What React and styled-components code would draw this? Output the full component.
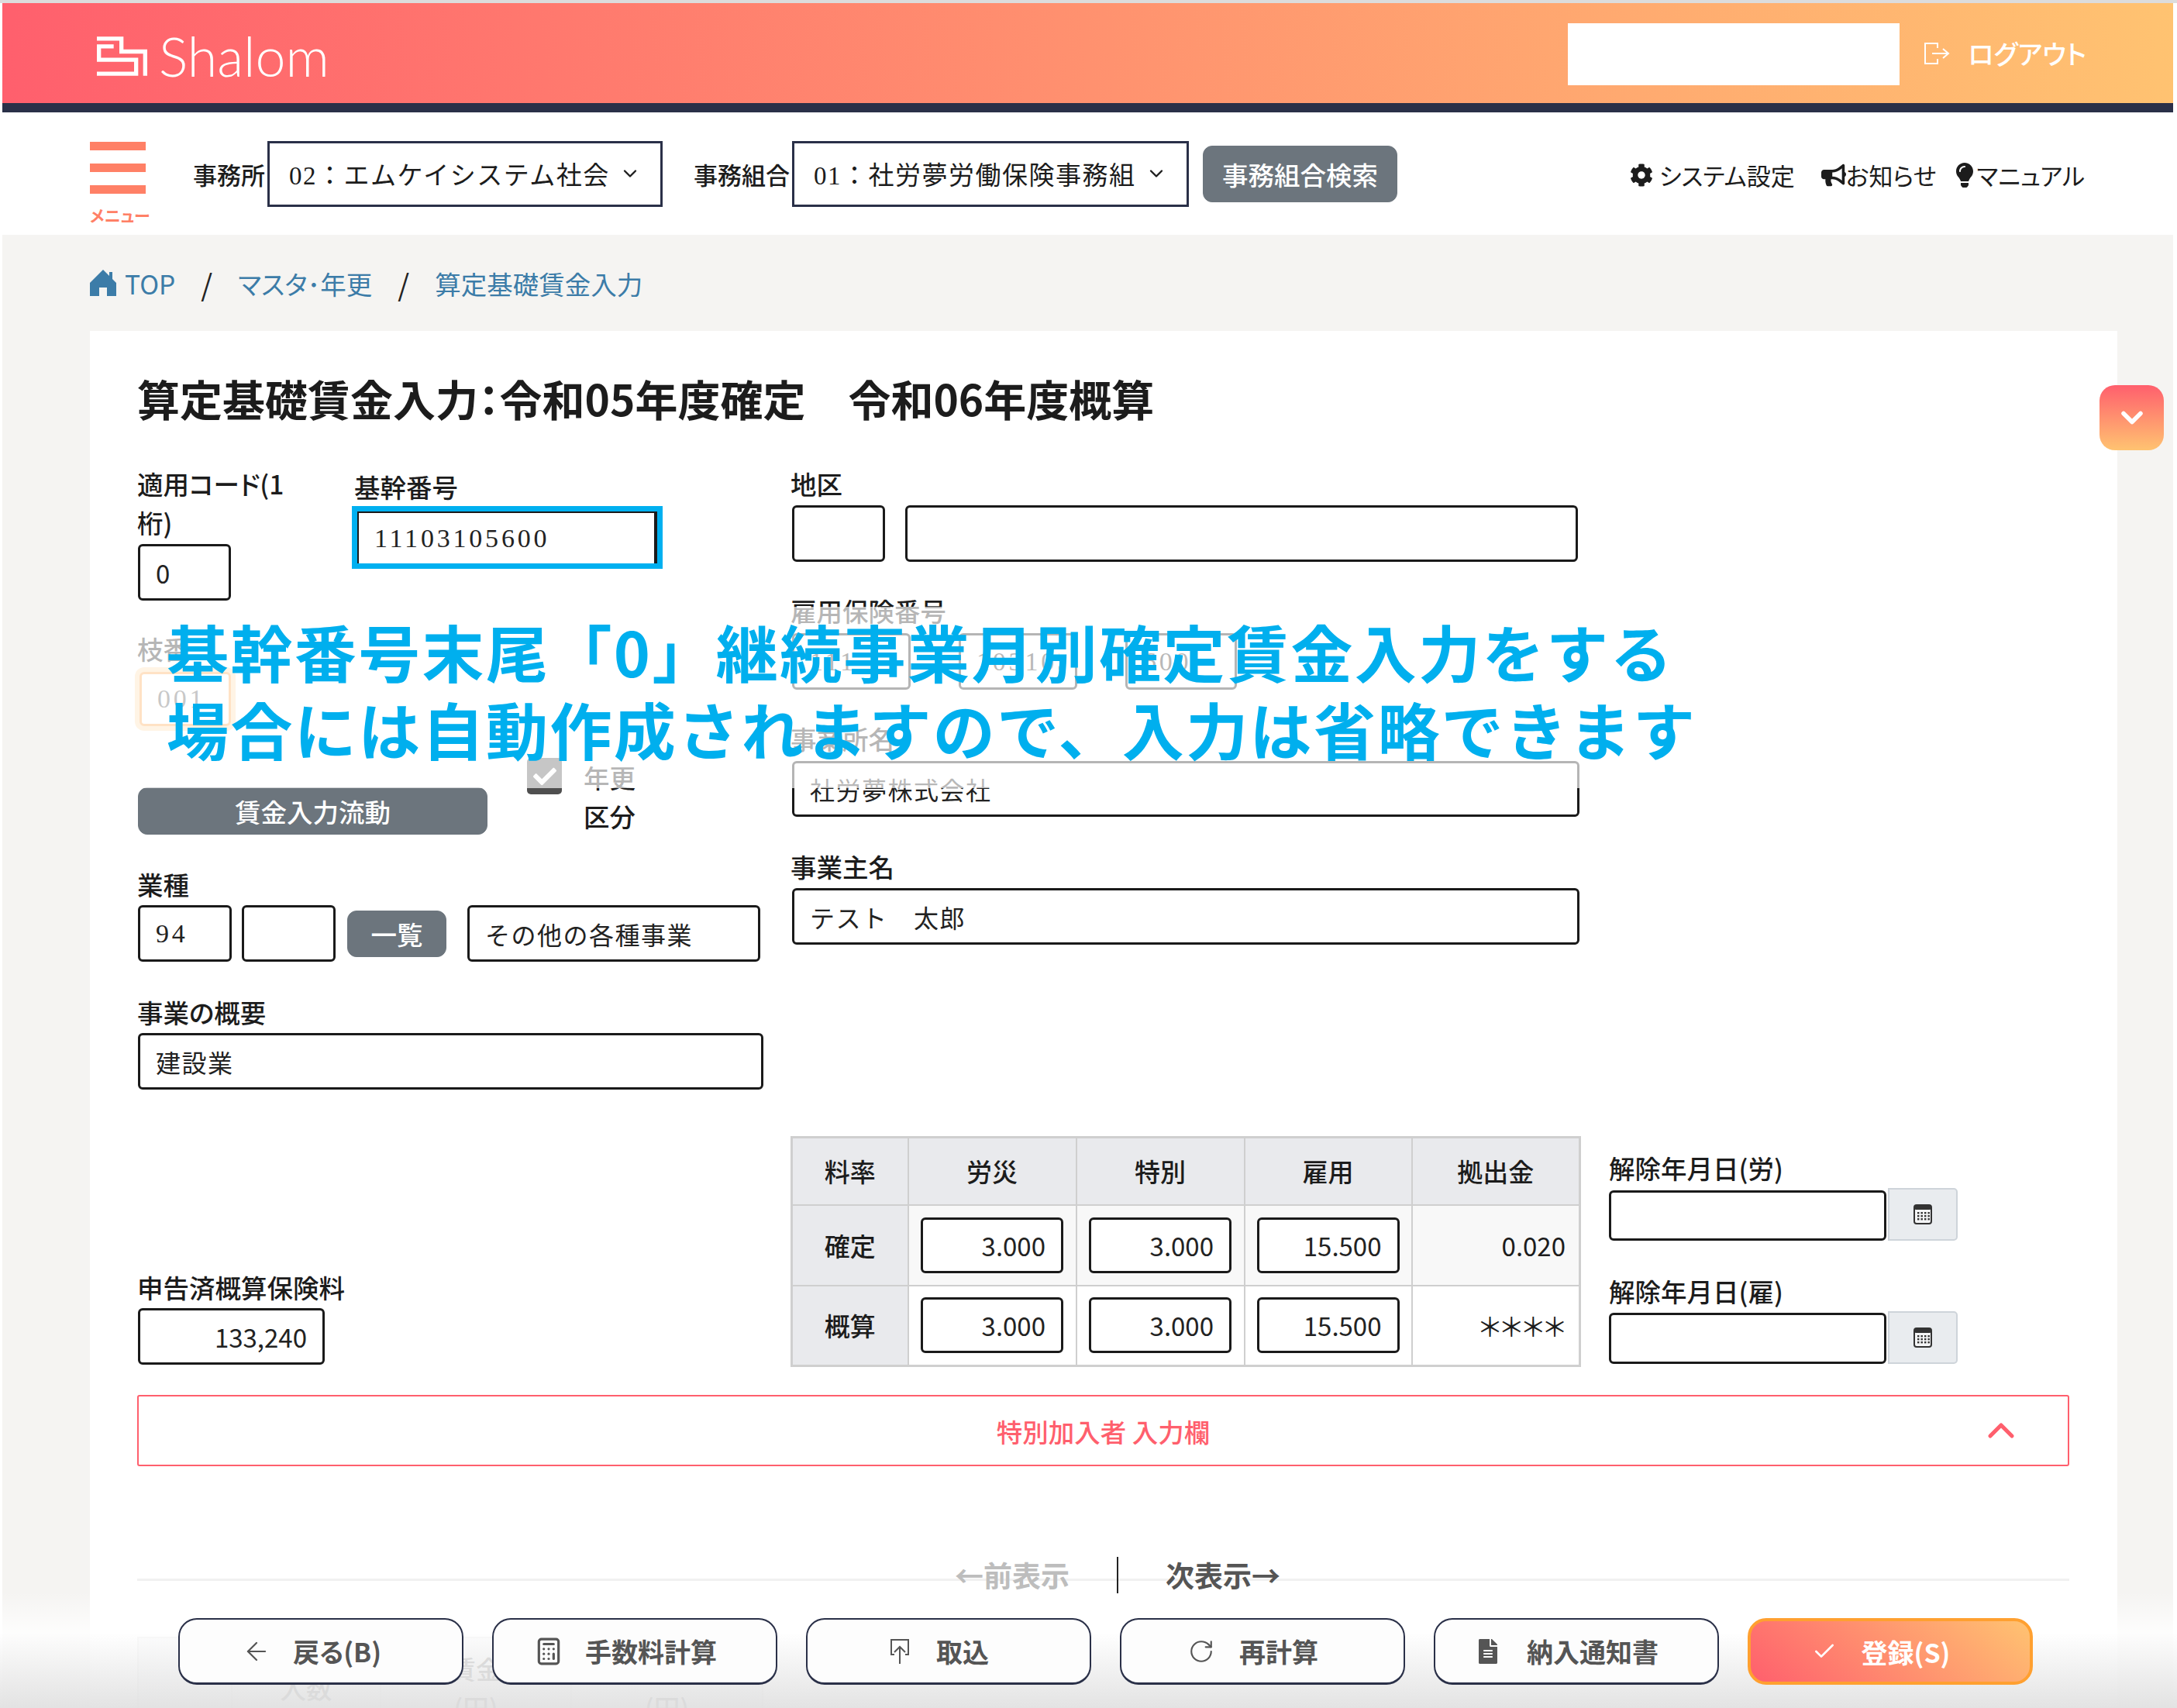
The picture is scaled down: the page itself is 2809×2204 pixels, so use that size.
import React from 'react';
import styled, { createGlobalStyle } from 'styled-components';
import { FaCog, FaBullhorn, FaLightbulb, FaFileAlt, FaCheck } from 'react-icons/fa';
import { ArrowLeft, Calculator, Check, ChevronDown, ChevronUp, RotateCw } from 'lucide-react';

const GlobalStyle = createGlobalStyle`
  html, body { margin: 0; padding: 0; background: #fff; }
  * { box-sizing: border-box; }
  body {
    font-family: "Noto Sans CJK JP", "Noto Sans", sans-serif;
    font-feature-settings: "palt";
    color: #1c1c1c;
  }
`;

const Screen = styled.div`
  position: relative;
  width: 2809px;
  height: 2204px;
  overflow: hidden;
  padding: 4px 5px 0 3px;
  background: #fff;
  &::before {
    content: '';
    position: absolute;
    top: 0;
    left: 0;
    right: 0;
    height: 4px;
    background: #dcdcdc;
  }
`;

const Header = styled.header`
  display: flex;
  align-items: center;
  height: 141px;
  padding: 2px 112px 0 122px;
  background: linear-gradient(82deg, #ff5f6d 0%, #ffc371 100%);
  border-bottom: 12px solid #2a3048;
`;

const Logo = styled.div`
  display: flex;
  align-items: center;
  gap: 15px;
  margin-top: 5px;
  color: #fff;
  font-family: Lato, sans-serif;
  font-weight: 300;
  font-size: 70px;
  line-height: 1;
`;

const UserBox = styled.div`
  width: 428px;
  height: 80px;
  margin-left: auto;
  background: #fff;
`;

const Logout = styled.div`
  display: flex;
  align-items: center;
  gap: 24px;
  margin-left: 31px;
  margin-top: -2px;
  color: #fff;
  font-size: 34px;
  font-weight: 500;
`;

const Nav = styled.nav`
  display: flex;
  align-items: center;
  height: 158px;
  padding: 0 114px 0 113px;
  background: #fff;
`;

const MenuButton = styled.div`
  display: flex;
  flex-direction: column;
  gap: 17px;
  width: 78px;
  margin-top: 21px;
  margin-right: 55px;
  color: #ff8066;
  font-size: 21px;
  font-weight: 700;
  line-height: 20px;
  white-space: nowrap;
`;

const MenuBar = styled.span`
  display: block;
  width: 72px;
  height: 11px;
  background: #ff8066;
`;

const NavLabel = styled.span`
  font-size: 31px;
  font-weight: 500;
  margin-right: 3px;
  white-space: nowrap;
`;

const Select = styled.div`
  display: flex;
  align-items: center;
  justify-content: space-between;
  width: ${(p) => p.$width}px;
  height: 85px;
  margin-right: ${(p) => p.$gap}px;
  padding: 0 25px 0 25px;
  border: 3px solid #2a3048;
  background: #fff;
  font-family: "Liberation Serif", "Noto Sans CJK JP", serif;
  font-feature-settings: normal;
  font-size: 33px;
  letter-spacing: 1.5px;
  white-space: nowrap;
`;

const GreyButton = styled.button`
  width: ${(p) => p.$width}px;
  height: ${(p) => p.$height}px;
  flex: none;
  padding: 0;
  border: 1px solid #6c757d;
  border-radius: 12px;
  background: #6c757d;
  color: #fff;
  font-family: inherit;
  font-feature-settings: inherit;
  font-size: 33.5px;
  font-weight: 500;
`;

const NavLinks = styled.div`
  display: flex;
  align-items: center;
  margin-left: auto;
  padding-top: 3px;
  font-size: 31px;
`;

const NavLink = styled.span`
  display: flex;
  align-items: center;
  gap: ${(p) => p.$gap || 0}px;
  margin-left: ${(p) => p.$left || 0}px;
  white-space: nowrap;
`;

const Main = styled.main`
  padding: 0 72px 0 113px;
  background: #f5f4f2;
`;

const Breadcrumb = styled.div`
  display: flex;
  align-items: center;
  height: 124px;
  color: #3c7ca8;
  font-size: 33.5px;
`;

const Crumb = styled.span`
  display: flex;
  align-items: center;
  gap: 11px;
`;

const Slash = styled.span`
  margin: 0 33px;
  color: #222;
  font-size: 38px;
`;

const Card = styled.section`
  height: 1800px;
  padding: 49px 62px 0 61px;
  background: #fff;
`;

const Title = styled.h1`
  margin: 0 0 49px;
  font-size: 55px;
  font-weight: 700;
  line-height: 74px;
  white-space: pre;
`;

const FormTop = styled.div`
  display: flex;
  height: 811px;
`;

const LeftColumn = styled.div`
  width: 843px;
  flex: none;
  padding-bottom: ${(p) => p.$bottom || 0}px;
`;

const RightColumn = styled.div`
  width: 1018px;
`;

const Row = styled.div`
  display: flex;
  align-items: ${(p) => p.$align || 'flex-start'};
  gap: ${(p) => p.$gap || 0}px;
  margin-top: ${(p) => p.$top || 0}px;
`;

const Label = styled.div`
  width: ${(p) => (p.$width ? `${p.$width}px` : 'auto')};
  margin-top: ${(p) => p.$top || 0}px;
  font-size: 33.5px;
  font-weight: 500;
  line-height: 50px;
  white-space: ${(p) => (p.$width ? 'normal' : 'nowrap')};
`;

const TextInput = styled.input`
  display: block;
  flex: none;
  width: ${(p) => p.$width}px;
  height: ${(p) => p.$height || 73}px;
  margin-left: ${(p) => p.$left || 0}px;
  margin-top: ${(p) => p.$top || 0}px;
  padding: 0 20px;
  border: 3px solid #1a1a1a;
  border-radius: 6px;
  background: #fff;
  color: #222;
  font-family: ${(p) =>
    p.$sans ? '"Noto Sans CJK JP", sans-serif' : '"Liberation Serif", "Noto Sans CJK JP", serif'};
  font-feature-settings: normal;
  font-size: ${(p) => (p.$digits ? 34 : p.$sans ? 33 : 32)}px;
  letter-spacing: ${(p) => (p.$digits ? 3.8 : p.$sans ? 0 : 1.5)}px;
  text-align: ${(p) => p.$align || 'left'};
  outline: none;
`;

const CodeField = styled.div`
  width: 280px;
`;

const Highlight = styled.div`
  width: 401px;
  height: 81px;
  margin: 0 0 0 -3px;
  border: 7px solid #00b0f0;
`;

const HighlightInput = styled(TextInput)`
  width: 100%;
  height: 100%;
  border-width: 2px 4px 0 2px;
  border-radius: 0;
`;

const GlowInput = styled(TextInput)`
  border-color: #ffa64d;
  box-shadow: 0 0 0 6px #ffdcae;
  color: #555;
`;

const Checkbox = styled.span`
  display: flex;
  align-items: center;
  justify-content: center;
  width: 45px;
  height: 47px;
  margin-left: 51px;
  flex: none;
  border-radius: 5px;
  background: #4f4f4f;
  color: #fff;
  font-size: 30px;
`;

const CheckLabel = styled.div`
  width: 70px;
  margin: 0 0 0 28px;
  font-size: 33.5px;
  font-weight: 500;
  line-height: 50px;
`;

const RateSection = styled.div`
  display: flex;
  align-items: flex-end;
  margin-top: 56px;
`;

const RateTable = styled.table`
  width: 1017px;
  height: 295px;
  flex: none;
  border-collapse: collapse;
  table-layout: fixed;
  font-size: 33px;
  border: 3px solid #cfcfcf;
  th, td {
    border: 2px solid #cfcfcf;
    padding: 0;
    text-align: center;
    vertical-align: middle;
  }
  th {
    background: #e9eaed;
    font-weight: 500;
  }
  tbody tr:first-child td {
    background: #f8f8f8;
  }
`;

const RateInput = styled(TextInput)`
  margin: 0 auto;
  height: 72px;
`;

const RateValue = styled.div`
  padding-right: 17px;
  text-align: right;
  font-size: ${(p) => p.$size || 33}px;
`;

const DateColumn = styled.div`
  align-self: flex-start;
  margin-left: 36px;
  padding-top: 16px;
`;

const DateGroup = styled.div`
  margin-top: ${(p) => p.$top || 0}px;
`;

const DateRow = styled.div`
  display: flex;
  align-items: flex-end;
  height: 68px;
  margin-top: 1px;
`;

const DateButton = styled.span`
  display: flex;
  align-items: center;
  justify-content: center;
  width: 90px;
  height: 68px;
  margin-left: 2px;
  border: 2px solid #ced4da;
  border-radius: 0 5px 5px 0;
  background: #e9ecef;
`;

const SpecialBar = styled.div`
  display: grid;
  grid-template-columns: 1fr auto 1fr;
  align-items: center;
  height: 92px;
  margin-top: 36px;
  padding: 0 58px;
  border: 2px solid #ff5f6d;
  border-radius: 3px;
  color: #ff5f6d;
  font-size: 33.5px;
  font-weight: 500;
  span:first-child { grid-column: 2; }
  svg { justify-self: end; }
`;

const Pager = styled.div`
  position: relative;
  display: grid;
  grid-template-columns: 1264px 2px 1fr;
  align-items: center;
  height: 47px;
  margin-top: 117px;
  font-size: 37px;
  font-weight: 700;
  line-height: 47px;
  &::before {
    content: '';
    position: absolute;
    left: 0;
    right: 0;
    top: 28px;
    height: 3px;
    background: #f1f1f1;
  }
`;

const PagerLink = styled.span`
  position: relative;
  color: ${(p) => (p.$disabled ? '#bdbdbd' : '#555')};
  text-align: ${(p) => (p.$disabled ? 'right' : 'left')};
  padding: ${(p) => (p.$disabled ? '0 61px 0 0' : '0 0 0 61px')};
  white-space: nowrap;
`;

const PagerLine = styled.span`
  position: relative;
  display: block;
  height: 47px;
  background: #222;
`;

const WageTable = styled.table`
  width: 806px;
  margin-top: 56px;
  border-collapse: collapse;
  table-layout: fixed;
  font-size: 33.5px;
  line-height: 50px;
  th {
    height: 130px;
    border: 2px solid #dcdcdc;
    background: #f0f1f3;
    color: #333;
    font-weight: 500;
    text-align: center;
  }
`;

const Banner = styled.div`
  position: absolute;
  top: 783px;
  left: 120px;
  width: 2200px;
  height: 234px;
  padding: 6px 0 0 95px;
  background: rgba(255, 255, 255, 0.68);
  color: #00afee;
  font-size: 80px;
  font-weight: 700;
  letter-spacing: 2.4px;
  line-height: 100px;
  white-space: nowrap;
  font-feature-settings: normal;
  span { display: block; }
`;

const ScrollPill = styled.div`
  position: absolute;
  top: 497px;
  left: 2709px;
  display: flex;
  align-items: center;
  justify-content: center;
  width: 83px;
  height: 84px;
  border-radius: 20px;
  background: linear-gradient(180deg, #ff5f6d, #ffc371);
  color: #fff;
`;

const Footer = styled.footer`
  position: absolute;
  left: 0;
  right: 0;
  bottom: 0;
  display: flex;
  align-items: flex-end;
  gap: 37px;
  height: 150px;
  padding: 0 0 30px 230px;
  background: linear-gradient(
    180deg,
    rgba(255, 255, 255, 0) 0%,
    rgba(255, 255, 255, 0.82) 35%,
    rgba(226, 226, 226, 0.96) 100%
  );
`;

const FooterButton = styled.button`
  display: flex;
  align-items: center;
  justify-content: center;
  gap: ${(p) => p.$gap || 28}px;
  width: 368px;
  height: 86px;
  padding: 0 24px 0 0;
  border: 2px solid ${(p) => (p.$primary ? '#ffa030' : '#2a3048')};
  border-width: ${(p) => (p.$primary ? '4px' : '2px 2px 3px')};
  border-radius: 24px;
  background: ${(p) =>
    p.$primary ? 'linear-gradient(40deg, #ff5f6d 0%, #ffc371 100%)' : '#fdfdfd'};
  color: ${(p) => (p.$primary ? '#fff' : '#555')};
  font-family: inherit;
  font-feature-settings: inherit;
  font-size: 34px;
  font-weight: 700;
`;

const LogoMark = () => (
  <svg width="65" height="51" viewBox="45 30 195 152" fill="none" stroke="#fff" strokeWidth="16">
    <path d="M45 38H140V88H232V182" />
    <path d="M110 68H53V120H197V174H45" />
  </svg>
);

const LogoutIcon = () => (
  <svg width="34" height="30" viewBox="0 0 34 30" fill="none" stroke="#fff" strokeWidth="2">
    <path d="M18 8V2H2V28H18V22" />
    <path d="M11 15H32M25 9L32 15L25 21" />
  </svg>
);

const HomeIcon = () => (
  <svg width="34" height="34" viewBox="0 0 34 34" fill="#3c7ca8">
    <path d="M17 0L25 8V3H29V12L34 17V34H22V23H12V34H0V17Z" />
  </svg>
);

const ImportIcon = () => (
  <svg width="26" height="34" viewBox="0 0 26 34" fill="none" stroke="#555" strokeWidth="2">
    <path d="M6 21H2V2H24V21H20" />
    <path d="M13 33V11M6 18L13 11L20 18" />
  </svg>
);

const CalendarIcon = () => (
  <svg width="24" height="26" viewBox="0 0 24 26">
    <rect x="1" y="1" width="22" height="24" rx="3" fill="#f4f5f6" stroke="#333" strokeWidth="2" />
    <rect x="1" y="1" width="22" height="6" rx="2" fill="#333" />
    {[10, 14, 18].map((y) =>
      [5, 9.5, 14, 18.5].map((x) => <rect key={`${x}-${y}`} x={x} y={y} width="2.4" height="2.4" fill="#333" />)
    )}
  </svg>
);

const App = () => {
  return (
    <Screen>
      <GlobalStyle />
      <Header>
        <Logo>
          <LogoMark />
          Shalom
        </Logo>
        <UserBox />
        <Logout>
          <LogoutIcon />
          ログアウト
        </Logout>
      </Header>

      <Nav>
        <MenuButton>
          <MenuBar />
          <MenuBar />
          <MenuBar />
          メニュー
        </MenuButton>
        <NavLabel>事務所</NavLabel>
        <Select $width={510} $gap={40}>
          02：エムケイシステム社会
          <ChevronDown size={28} strokeWidth={2} />
        </Select>
        <NavLabel>事務組合</NavLabel>
        <Select $width={512} $gap={18}>
          01：社労夢労働保険事務組
          <ChevronDown size={28} strokeWidth={2} />
        </Select>
        <GreyButton $width={251} $height={73}>事務組合検索</GreyButton>
        <NavLinks>
          <NavLink $gap={8}><FaCog size={30} />システム設定</NavLink>
          <NavLink $left={34}><FaBullhorn size={32} />お知らせ</NavLink>
          <NavLink $left={20}><FaLightbulb size={32} />マニュアル</NavLink>
        </NavLinks>
      </Nav>

      <Main>
        <Breadcrumb>
          <Crumb><HomeIcon />TOP</Crumb>
          <Slash>/</Slash>
          <Crumb>マスタ･年更</Crumb>
          <Slash>/</Slash>
          <Crumb>算定基礎賃金入力</Crumb>
        </Breadcrumb>

        <Card>
          <Title>算定基礎賃金入力：令和05年度確定　令和06年度概算</Title>

          <FormTop>
            <LeftColumn>
              <Row>
                <CodeField>
                  <Label $width={200}>適用コード(1桁)</Label>
                  <TextInput $width={120} $left={1} $top={3} $sans readOnly value="0" />
                </CodeField>
                <div>
                  <Label $top={4}>基幹番号</Label>
                  <Highlight>
                    <HighlightInput $width={400} $digits readOnly value="11103105600" />
                  </Highlight>
                </div>
              </Row>

              <Label $top={37}>枝番</Label>
              <GlowInput $width={118} $height={70} $left={3} $top={5} $digits readOnly value="001" />

              <Row $top={41}>
                <GreyButton $width={451} $height={61} style={{ margin: '38px 0 0 1px' }}>賃金入力流動</GreyButton>
                <Checkbox><FaCheck /></Checkbox>
                <CheckLabel>年更区分</CheckLabel>
              </Row>

              <Label $top={38}>業種</Label>
              <Row $align="center" $top={2}>
                <TextInput $width={121} $left={1} $digits readOnly value="94" />
                <TextInput $width={121} $left={13} readOnly value="" />
                <GreyButton $width={128} $height={60} style={{ marginLeft: 15 }}>一覧</GreyButton>
                <TextInput $width={378} $left={27} readOnly value="その他の各種事業" />
              </Row>

              <Label $top={40}>事業の概要</Label>
              <TextInput $width={807} $left={1} $top={2} readOnly value="建設業" />
            </LeftColumn>

            <RightColumn>
              <Label>地区</Label>
              <Row $gap={26} $top={3}>
                <TextInput $width={120} $left={2} readOnly value="" />
                <TextInput $width={868} readOnly value="" />
              </Row>

              <Label $top={38}>雇用保険番号</Label>
              <Row $top={4}>
                <TextInput $width={153} $left={2} $digits readOnly value="111" />
                <TextInput $width={153} $left={62} $digits readOnly value="103105" />
                <TextInput $width={144} $left={62} $digits readOnly value="600" />
              </Row>

              <Label $top={38}>事業所名</Label>
              <TextInput $width={1016} $left={2} $height={72} $top={4} readOnly value="社労夢株式会社" />

              <Label $top={39}>事業主名</Label>
              <TextInput $width={1016} $left={2} $top={3} readOnly value="テスト　太郎" />
            </RightColumn>
          </FormTop>

          <RateSection>
            <LeftColumn $bottom={3}>
              <Label>申告済概算保険料</Label>
              <TextInput $width={241} $left={1} $top={2} $align="right" $sans readOnly value="133,240" />
            </LeftColumn>
            <RateTable>
              <colgroup>
                <col style={{ width: 150 }} />
                <col style={{ width: 217 }} />
                <col style={{ width: 217 }} />
                <col style={{ width: 216 }} />
                <col style={{ width: 217 }} />
              </colgroup>
              <thead>
                <tr style={{ height: 87 }}>
                  <th>料率</th>
                  <th>労災</th>
                  <th>特別</th>
                  <th>雇用</th>
                  <th>拠出金</th>
                </tr>
              </thead>
              <tbody>
                <tr style={{ height: 104 }}>
                  <th>確定</th>
                  <td><RateInput $width={184} $align="right" $sans readOnly value="3.000" /></td>
                  <td><RateInput $width={184} $align="right" $sans readOnly value="3.000" /></td>
                  <td><RateInput $width={184} $align="right" $sans readOnly value="15.500" /></td>
                  <td><RateValue>0.020</RateValue></td>
                </tr>
                <tr style={{ height: 104 }}>
                  <th>概算</th>
                  <td><RateInput $width={184} $align="right" $sans readOnly value="3.000" /></td>
                  <td><RateInput $width={184} $align="right" $sans readOnly value="3.000" /></td>
                  <td><RateInput $width={184} $align="right" $sans readOnly value="15.500" /></td>
                  <td><RateValue $size={34}>＊＊＊＊</RateValue></td>
                </tr>
              </tbody>
            </RateTable>
            <DateColumn>
              <DateGroup>
                <Label>解除年月日(労)</Label>
                <DateRow>
                  <TextInput $width={358} $height={65} readOnly value="" />
                  <DateButton><CalendarIcon /></DateButton>
                </DateRow>
              </DateGroup>
              <DateGroup $top={40}>
                <Label>解除年月日(雇)</Label>
                <DateRow>
                  <TextInput $width={358} $height={66} readOnly value="" />
                  <DateButton><CalendarIcon /></DateButton>
                </DateRow>
              </DateGroup>
            </DateColumn>
          </RateSection>

          <SpecialBar>
            <span>特別加入者 入力欄</span>
            <ChevronUp size={56} strokeWidth={2.2} />
          </SpecialBar>

          <Pager>
            <PagerLink $disabled>←前表示</PagerLink>
            <PagerLine />
            <PagerLink>次表示→</PagerLink>
          </Pager>

          <WageTable>
            <colgroup>
              <col style={{ width: 121 }} />
              <col style={{ width: 192 }} />
              <col style={{ width: 246 }} />
              <col style={{ width: 247 }} />
            </colgroup>
            <thead>
              <tr>
                <th />
                <th>人数</th>
                <th>賃金<br />(円)</th>
                <th>賃金<br />(円)</th>
              </tr>
            </thead>
          </WageTable>
        </Card>
      </Main>

      <Banner>
        <span>基幹番号末尾「0」継続事業月別確定賃金入力をする</span>
        <span>場合には自動作成されますので、入力は省略できます</span>
      </Banner>

      <ScrollPill><ChevronDown size={44} strokeWidth={3} /></ScrollPill>

      <Footer>
        <FooterButton><ArrowLeft size={38} strokeWidth={1.4} />戻る(B)</FooterButton>
        <FooterButton><Calculator size={38} strokeWidth={2} />手数料計算</FooterButton>
        <FooterButton $gap={34}><ImportIcon />取込</FooterButton>
        <FooterButton $gap={32}><RotateCw size={34} strokeWidth={1.5} />再計算</FooterButton>
        <FooterButton $gap={34}><FaFileAlt size={32} />納入通知書</FooterButton>
        <FooterButton $primary $gap={32}><Check size={32} strokeWidth={2} />登録(S)</FooterButton>
      </Footer>
    </Screen>
  );
};

export default App;
